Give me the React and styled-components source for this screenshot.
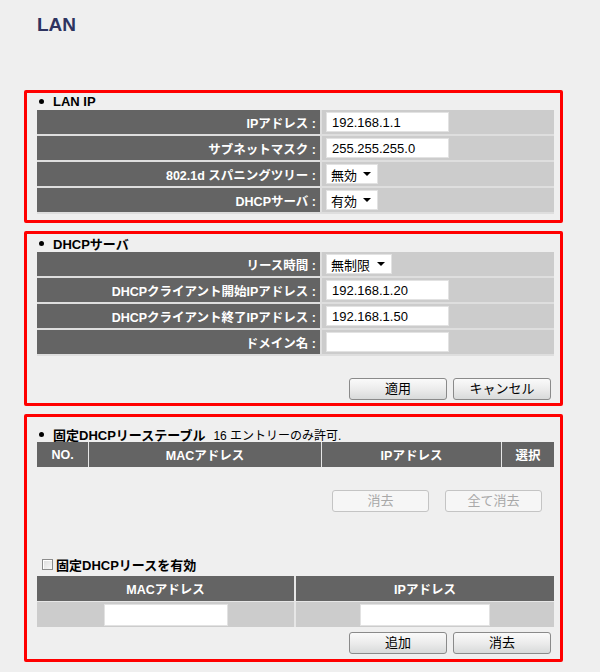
import React from "react";
import styled, { createGlobalStyle } from "styled-components";

const GlobalStyle = createGlobalStyle`
  html, body {
    margin: 0;
    padding: 0;
    background: #efefef;
  }
  body {
    font-family: "Liberation Sans", "Noto Sans CJK JP", sans-serif;
    color: #000;
  }
`;

const Page = styled.div`
  width: 600px;
  height: 672px;
  background: #efefef;
  overflow: hidden;
`;

const Title = styled.h1`
  margin: 0;
  height: 90px;
  box-sizing: border-box;
  padding: 13px 0 0 37px;
  font-size: 19px;
  line-height: 24px;
  font-weight: 700;
  color: #2e3460;
`;

/* ===== red framed section ===== */
const Box = styled.section`
  width: 539px;
  margin: 0 0 ${(p) => p.$gap || 0}px 24px;
  box-sizing: border-box;
  border: 3px solid #ff0000;
  border-radius: 2px;
  padding: ${(p) => p.$pt || 0}px 6px ${(p) => p.$pb || 0}px 10px;
`;

const SectionHead = styled.div`
  height: ${(p) => p.$h || 17}px;
  display: flex;
  align-items: center;
  font-size: 13px;
  font-weight: 700;
  white-space: nowrap;
  &::before {
    content: "";
    width: 5px;
    height: 5px;
    border-radius: 50%;
    background: #000;
    margin: 0 9px 0 2px;
  }
`;

const HeadNote = styled.span`
  font-weight: 400;
  font-size: 12px;
  margin-left: 8px;
`;

/* ===== label / value form table ===== */
const FormTable = styled.div`
  width: 517px;
  display: grid;
  grid-template-columns: 283px 1fr;
  gap: 2px;
  padding-bottom: 2px;
  background: #dedede;
`;

const Label = styled.div`
  height: 24px;
  background: #646464;
  color: #fff;
  font-size: 12.5px;
  font-weight: 700;
  display: flex;
  align-items: center;
  justify-content: flex-end;
  padding-right: 4px;
  white-space: nowrap;
`;

const Value = styled.div`
  height: 24px;
  background: #cccccc;
  display: flex;
  align-items: center;
  padding-left: 4px;
`;

const TextInput = styled.input`
  width: ${(p) => p.$w || 123}px;
  height: ${(p) => p.$h || 20}px;
  box-sizing: border-box;
  border: 1px solid #e2e2e2;
  background: #fff;
  padding: 0 5px;
  font-family: "Liberation Sans", "Noto Sans CJK JP", sans-serif;
  font-size: 13px;
  color: #000;
  outline: none;
`;

const Select = styled.div`
  width: ${(p) => p.$w || 52}px;
  height: 20px;
  box-sizing: border-box;
  background: #fff;
  border: 1px solid #e2e2e2;
  display: flex;
  align-items: center;
  justify-content: space-between;
  padding: 0 6px 0 4px;
  font-size: 13px;
  &::after {
    content: "";
    border-left: 4px solid transparent;
    border-right: 4px solid transparent;
    border-top: 4px solid #000;
  }
`;

/* ===== grid header tables ===== */
const GridTable = styled.div`
  width: 517px;
  display: grid;
  grid-template-columns: ${(p) => p.$cols};
  column-gap: ${(p) => p.$gap || 1}px;
  row-gap: 1px;
  background: #e6e6e6;
`;

const HeadCell = styled.div`
  height: 25px;
  background: #646464;
  color: #fff;
  font-size: 12.5px;
  font-weight: 700;
  display: flex;
  align-items: center;
  justify-content: center;
`;

const DataCell = styled.div`
  height: 25px;
  background: #cccccc;
  display: flex;
  align-items: center;
  justify-content: center;
`;

/* ===== buttons ===== */
const ButtonRow = styled.div`
  display: flex;
  justify-content: flex-end;
  gap: ${(p) => p.$gap || 6}px;
  padding-right: ${(p) => p.$pr || 3}px;
  margin-top: ${(p) => p.$mt || 0}px;
`;

const Button = styled.button`
  width: ${(p) => p.$w || 98}px;
  height: 22px;
  box-sizing: border-box;
  border: 1px solid ${(p) => (p.disabled ? "#c4c4c4" : "#8a8a8a")};
  border-radius: 3px;
  background: ${(p) =>
    p.disabled
      ? "#f6f6f6"
      : "linear-gradient(#fafafa 0%, #ececec 50%, #d8dada 100%)"};
  color: ${(p) => (p.disabled ? "#a8a8a8" : "#000")};
  font-family: "Liberation Sans", "Noto Sans CJK JP", sans-serif;
  font-size: 13px;
  padding: 0;
  line-height: 20px;
`;

const CheckRow = styled.label`
  display: flex;
  align-items: center;
  height: 16px;
  margin: ${(p) => p.$mt || 0}px 0 4px 5px;
  font-size: 13px;
  font-weight: 700;
  gap: 3px;
`;

const CheckBox = styled.span`
  width: 11px;
  height: 11px;
  box-sizing: border-box;
  border: 1px solid #8c8c8c;
  background: linear-gradient(135deg, #dcdcdc, #f8f8f8);
  box-shadow: inset 1px 1px 0 #fff;
`;

export default function App() {
  return (
    <Page>
      <GlobalStyle />
      <Title>LAN</Title>

      <Box $gap={8} $pb={6}>
        <SectionHead $h={17}>LAN IP</SectionHead>
        <FormTable>
          <Label>IPアドレス :</Label>
          <Value>
            <TextInput defaultValue="192.168.1.1" />
          </Value>
          <Label>サブネットマスク :</Label>
          <Value>
            <TextInput defaultValue="255.255.255.0" />
          </Value>
          <Label>802.1d スパニングツリー :</Label>
          <Value>
            <Select>無効</Select>
          </Value>
          <Label>DHCPサーバ :</Label>
          <Value>
            <Select>有効</Select>
          </Value>
        </FormTable>
      </Box>

      <Box $gap={8} $pb={3}>
        <SectionHead $h={18}>DHCPサーバ</SectionHead>
        <FormTable>
          <Label>リース時間 :</Label>
          <Value>
            <Select $w={66}>無制限</Select>
          </Value>
          <Label>DHCPクライアント開始IPアドレス :</Label>
          <Value>
            <TextInput defaultValue="192.168.1.20" />
          </Value>
          <Label>DHCPクライアント終了IPアドレス :</Label>
          <Value>
            <TextInput defaultValue="192.168.1.50" />
          </Value>
          <Label>ドメイン名 :</Label>
          <Value>
            <TextInput defaultValue="" />
          </Value>
        </FormTable>
        <ButtonRow $mt={22}>
          <Button>適用</Button>
          <Button>キャンセル</Button>
        </ButtonRow>
      </Box>

      <Box $pt={9} $pb={5}>
        <SectionHead $h={16}>
          固定DHCPリーステーブル
          <HeadNote>16 エントリーのみ許可.</HeadNote>
        </SectionHead>
        <GridTable $cols="51px 232px 1fr 52px">
          <HeadCell>NO.</HeadCell>
          <HeadCell>MACアドレス</HeadCell>
          <HeadCell>IPアドレス</HeadCell>
          <HeadCell>選択</HeadCell>
        </GridTable>
        <ButtonRow $mt={23} $gap={16} $pr={12}>
          <Button $w={97} disabled>
            消去
          </Button>
          <Button $w={97} disabled>
            全て消去
          </Button>
        </ButtonRow>

        <CheckRow $mt={44}>
          <CheckBox />
          固定DHCPリースを有効
        </CheckRow>
        <GridTable $cols="257px 1fr" $gap={2}>
          <HeadCell>MACアドレス</HeadCell>
          <HeadCell>IPアドレス</HeadCell>
          <DataCell>
            <TextInput $w={124} $h={22} defaultValue="" />
          </DataCell>
          <DataCell>
            <TextInput $w={130} $h={22} defaultValue="" />
          </DataCell>
        </GridTable>
        <ButtonRow $mt={5}>
          <Button>追加</Button>
          <Button>消去</Button>
        </ButtonRow>
      </Box>
    </Page>
  );
}
